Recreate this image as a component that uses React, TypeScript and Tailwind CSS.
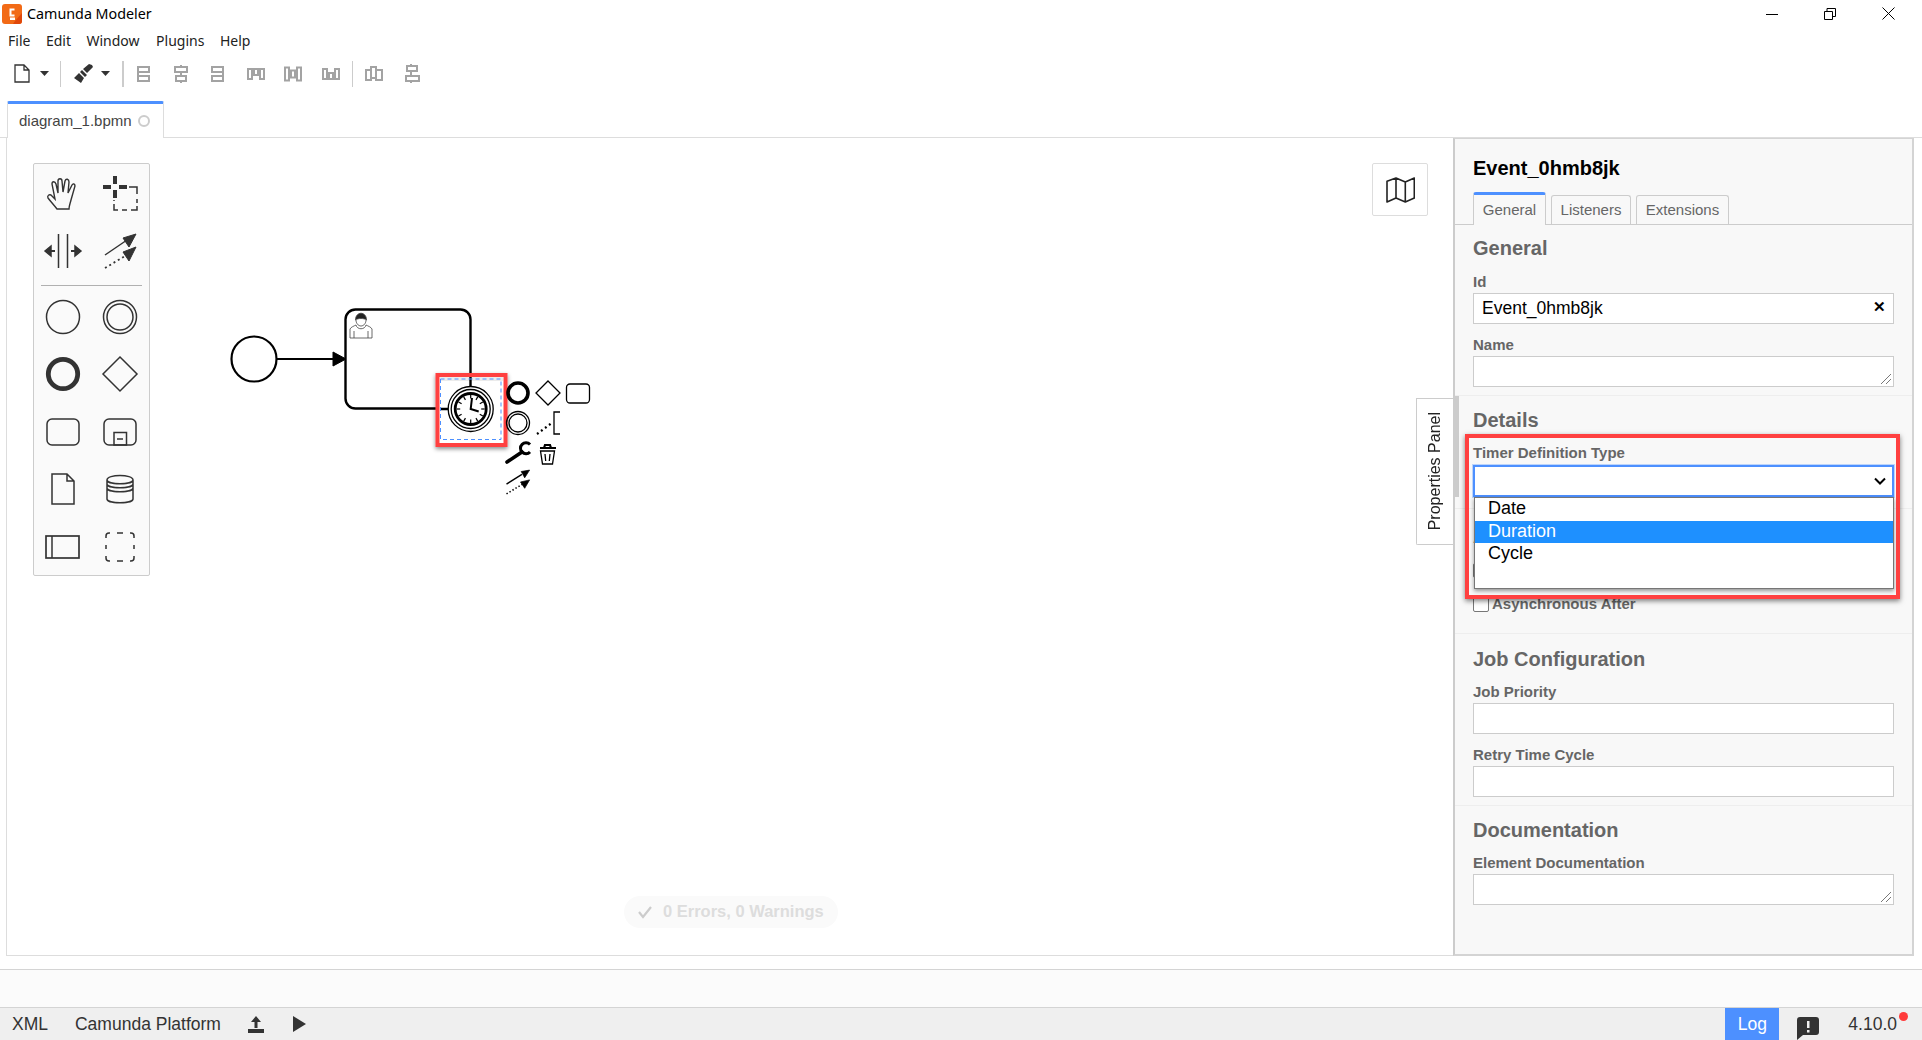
import React from "react";

const Sans = "font-['Liberation_Sans',Arial,sans-serif]";

const Ic = ({ children, w = 40, h = 40 }: { children: React.ReactNode; w?: number; h?: number }) => (
  <svg width={w} height={h} viewBox={`0 0 ${w} ${h}`} fill="none" stroke="#333" strokeWidth="1.5">
    {children}
  </svg>
);

const Lasso = () => (
  <Ic>
    <path d="M15 2v8M15 16v8M3 13h8M19 13h8" strokeWidth="4" />
    <path d="M29 13h8v7M37 25v4M37 32v4h-6M27 36h-5M18 36h-4v-6M14 27v-1" strokeWidth="1.5" />
  </Ic>
);
const SpaceTool = () => (
  <Ic>
    <path d="M15.500 3v34M24.500 3v34" />
    <path d="M2 20l6-5v10zM38 20l-6-5v10z" fill="#333" stroke="#333" />
    <path d="M7 20h5M28 20h5" strokeWidth="2" />
  </Ic>
);
const ConnectIc = () => (
  <svg width="40" height="40" viewBox="0 0 40 40" fill="none" stroke="#333">
    <path d="M5 24L27 9" strokeWidth="1.5" />
    <path d="M36 3L23 7l6 9z" fill="#333" />
    <path d="M5 37L25 25" strokeWidth="1.8" strokeDasharray="2 3" />
    <path d="M36 16l-13 5 6 9z" fill="#333" />
  </svg>
);

const Align = ({ d }: { d: string }) => (
  <svg width="20" height="24" viewBox="0 0 20 24" fill="none" stroke="#a3a3a3" strokeWidth="2">
    <path d={d} />
  </svg>
);

const paletteTop = [
  <Ic key="h">
    <path d="M14 35C11 31 8 28 5 24C4 22 6 20 8 21L12 25L9 10C9 7 12 7 13 10L15 19L15 7C15 4 19 4 19 7L20 18L22 7C23 4 26 5 26 8L25 19L29 11C30 9 32 10 32 12L28 26C27 30 26 32 26 35Z" strokeWidth="1.4" />
  </Ic>,
  <Lasso key="l" />,
  <SpaceTool key="s" />,
  <ConnectIc key="c" />,
];
const paletteBottom = [
  <Ic key="a"><circle cx="20" cy="20" r="16.5" /></Ic>,
  <Ic key="b"><circle cx="20" cy="20" r="16.5" /><circle cx="20" cy="20" r="13" /></Ic>,
  <Ic key="c"><circle cx="20" cy="20" r="14.7" strokeWidth="4.8" /></Ic>,
  <Ic key="d"><path d="M20 3l17 17-17 17L3 20z" /></Ic>,
  <Ic key="e"><rect x="4" y="7" width="32" height="26" rx="5" /></Ic>,
  <Ic key="f"><rect x="4" y="7" width="32" height="26" rx="5" /><rect x="14" y="20.5" width="12.5" height="12.5" /><path d="M17 27h6" /></Ic>,
  <Ic key="g"><path d="M9 5h15l7 7v23H9zM24 5v7h7" /></Ic>,
  <Ic key="h"><path d="M7 11c0-6 26-6 26 0v19c0 5-26 5-26 0zM7 11c0 5 26 5 26 0M7 15c0 5 26 5 26 0M7 19c0 5 26 5 26 0" /></Ic>,
  <Ic key="i"><rect x="3" y="9" width="33" height="22" strokeWidth="1.7" /><path d="M9 9v22" /></Ic>,
  <Ic key="j"><path d="M10 6h-1a3 3 0 0 0-3 3v2M17 6h6M30 6h1a3 3 0 0 1 3 3v2M34 18v4M34 29v2a3 3 0 0 1-3 3h-1M23 34h-6M10 34H9a3 3 0 0 1-3-3v-2M6 22v-4" /></Ic>,
];

const Diagram = () => {
  const ticks = Array.from({ length: 12 }, (_, i) => i * 30);
  return (
    <svg className="absolute left-0 top-0" width="700" height="420" viewBox="7 138 700 420" fill="none" stroke="#000">
      <defs>
        <filter id="sh" x="-20%" y="-20%" width="140%" height="140%">
          <feDropShadow dx="0" dy="2" stdDeviation="2" floodColor="#000" floodOpacity="0.45" />
        </filter>
      </defs>
      <circle cx="254" cy="359" r="22.5" strokeWidth="2.2" />
      <path d="M277 359H335" strokeWidth="2.2" />
      <path d="M333 352l13 7-13 7z" fill="#000" />
      <rect x="345.5" y="309.5" width="125" height="99" rx="10" strokeWidth="2.4" />
      <g stroke="#444" strokeWidth="0.8">
        <path d="M350 338v-9c1-2 4-3 6-4M372 338v-9c-1-2-4-3-6-4M350 338h22M354 338v-7M368 338v-7M356 325c1 5 9 5 10 0" />
        <path d="M355.500 320c0-9 11-9 11 0c-2-2-9-2-11 0z" fill="#222" />
        <path d="M356 320c0 3 2 6 5 6s5-3 5-6" />
      </g>
      <rect x="437.5" y="375" width="68" height="70" stroke="#ff4040" strokeWidth="4" fill="#fff" filter="url(#sh)" />
      <path d="M440 377h63v4h-63z" fill="#ddd" stroke="none" opacity="0.6" />
      <path d="M470.5 377v12M441 409h8" strokeWidth="2.4" />
      <rect x="440.5" y="379" width="60.5" height="60.5" stroke="#4d90ff" strokeWidth="1" strokeDasharray="4 3" />
      <circle cx="470.7" cy="409" r="22.5" fill="#fff" strokeWidth="1.3" />
      <circle cx="470.7" cy="409" r="19.5" strokeWidth="1.3" />
      <circle cx="470.7" cy="409" r="15.5" strokeWidth="2.8" />
      {ticks.map((t) => (
        <path key={t} d="M470.7 395v3.500" strokeWidth="1.2" transform={`rotate(${t} 470.7 409)`} />
      ))}
      <path d="M472 398l-1.300 11 8 2.500" strokeWidth="2" />
      <circle cx="518" cy="393" r="10" strokeWidth="3.6" />
      <path d="M548 381l12 12-12 12-12-12z" strokeWidth="1.3" />
      <rect x="566.5" y="384" width="23" height="19" rx="3.5" strokeWidth="1.3" />
      <circle cx="518" cy="423" r="11.5" strokeWidth="1.3" />
      <circle cx="518" cy="423" r="9" strokeWidth="1.3" />
      <path d="M537 434l16-12" strokeWidth="2.2" strokeDasharray="2 3" />
      <path d="M560 412h-6v22h6" strokeWidth="1.3" />
      <path d="M507 462l15-10" strokeWidth="3.6" strokeLinecap="round" />
      <path d="M530 444.500a5.500 5.500 0 1 0 0 7.500" strokeWidth="3" />
      <path d="M540 448h16M544 448l1-3h5l1 3" strokeWidth="2.2" />
      <path d="M540.500 451h14l-2 13h-10zM545 454l.7 7M550 454l-.7 7" strokeWidth="1.3" />
      <svg x="503" y="468" width="28" height="28" viewBox="0 0 40 40" stroke="#000"><path d="M5 23L27 9" strokeWidth="2" /><path d="M38 3L26 5l5 9z" fill="#000" /><path d="M5 37L28 23" strokeWidth="2.2" strokeDasharray="2 3" /><path d="M38 17l-13 3 6 9z" fill="#000" /></svg>
    </svg>
  );
};

const Label = ({ children, className = "" }: { children: React.ReactNode; className?: string }) => (
  <div className={`h-[18px] text-[15px] leading-[18px] font-bold text-[#666] ${className}`}>{children}</div>
);
const Heading = ({ children }: { children: React.ReactNode }) => (
  <div className="h-[24px] text-[20px] leading-[24px] font-bold text-[#666]">{children}</div>
);
const Input = ({ grip, children }: { grip?: boolean; children?: React.ReactNode }) => (
  <div className="relative mt-[2px] flex h-[31px] items-center border border-[#ccc] bg-white pl-[8px] text-[17.5px] text-black">
    {children}
    {grip && (
      <svg className="absolute bottom-[1px] right-[1px]" width="12" height="12" viewBox="0 0 12 12" stroke="#555" strokeWidth="0.8">
        <path d="M1 11L11 1M6 11l5-5" />
      </svg>
    )}
  </div>
);
const Group = ({ children, className = "" }: { children: React.ReactNode; className?: string }) => (
  <div className={`border-b border-[#eee] px-[18px] ${className}`}>{children}</div>
);
const PTab = ({ children, active }: { children: React.ReactNode; active?: boolean }) => (
  <div
    className={`flex items-center justify-center rounded-t-[3px] border border-[#ccc] text-[15px] text-[#666] ${
      active ? "relative z-10 -mb-px h-[33px] w-[73px] border-t-[3px] border-t-[#4d90ff] border-b-0 bg-[#f8f8f8]" : "h-[29px] border-b-0"
    }`}
  >
    {children}
  </div>
);

const Panel = () => (
  <div className="flex w-[461px] flex-col border-x-2 border-b-2 border-t border-[#d4d4d4] border-l-[#ccc] bg-[#f8f8f8]">
    <div className="relative flex h-[86px] flex-col justify-between border-b border-[#ccc] pl-[18px]">
      <div className="pt-[17px] text-[20px] font-bold leading-[24px] text-black">Event_0hmb8jk</div>
      <div className="flex items-end gap-[5px]">
        <PTab active>General</PTab>
        <div className="w-[80px]"><PTab>Listeners</PTab></div>
        <div className="w-[93px]"><PTab>Extensions</PTab></div>
      </div>
    </div>
    <Group className="h-[171px] pt-[11px]">
      <Heading>General</Heading>
      <Label className="mt-[13px]">Id</Label>
      <Input>
        Event_0hmb8jk
        <span className="absolute right-[7px] top-[2px] text-[15px] font-bold">✕</span>
      </Input>
      <Label className="mt-[12px]">Name</Label>
      <Input grip />
    </Group>
    <Group className="h-[113px] pt-[12px]">
      <Heading>Details</Heading>
      <Label className="mt-[12px]">Timer Definition Type</Label>
      <div className="relative mt-[3px] h-[32px] border-2 border-[#4d90ff] bg-white shadow-[0_0_0_1px_#bcd4fb]">
        <svg className="absolute right-[6px] top-[10px]" width="12" height="9" viewBox="0 0 12 9" fill="none" stroke="#000" strokeWidth="2">
          <path d="M1 1.500l5 5 5-5" />
        </svg>
        <div className="absolute -left-[1px] top-[30px] z-20 h-[92px] w-[420px] border border-[#767676] bg-white text-[18px] text-black shadow-[0_2px_4px_rgba(0,0,0,0.4)]">
          <div className="h-[23px] pl-[13px] leading-[21px]">Date</div>
          <div className="h-[22px] bg-[#1e90ff] pl-[13px] leading-[21px] text-white">Duration</div>
          <div className="h-[22px] pl-[13px] leading-[20px]">Cycle</div>
        </div>
      </div>
    </Group>
    <Group className="h-[125px] pt-[15px]">
      <Heading>A</Heading>
      <div className="mt-[15px] h-[15px] w-[15px] rounded-[2px] border border-[#777] bg-white" />
      <div className="mt-[17px] flex items-center gap-[3px]">
        <div className="h-[16px] w-[16px] rounded-[2px] border border-[#777] bg-white" />
        <Label>Asynchronous After</Label>
      </div>
    </Group>
    <Group className="h-[172px] pt-[13px]">
      <Heading>Job Configuration</Heading>
      <Label className="mt-[12px]">Job Priority</Label>
      <Input />
      <Label className="mt-[12px]">Retry Time Cycle</Label>
      <Input />
    </Group>
    <div className="flex-1 px-[18px] pt-[12px]">
      <Heading>Documentation</Heading>
      <Label className="mt-[12px]">Element Documentation</Label>
      <Input grip />
    </div>
    <div className="pointer-events-none absolute left-[1453px] top-[396px] h-[101px] w-[6px] bg-[#ccc]" />
    <div className="pointer-events-none absolute left-[1465px] top-[434px] z-30 h-[165px] w-[435px] border-[4px] border-[#ff4040] shadow-[0_2px_5px_rgba(0,0,0,0.5)]" />
  </div>
);

export default function App() {
  return (
    <div className={`relative flex h-[1040px] w-[1922px] flex-col overflow-hidden bg-white ${Sans}`}>
      {/* title bar */}
      <div className="flex h-[27px] items-center pl-[2px] font-['Noto_Sans',sans-serif] text-[14.3px] text-black">
        <svg width="20" height="20" viewBox="0 0 20 20">
          <rect width="20" height="20" rx="3" fill="#f26a16" />
          <path d="M13 17L20 9v8a3 3 0 0 1-3 3h-6z" fill="#e0480a" />
          <path d="M12.500 5.500H8.500v6h4" fill="none" stroke="#fff" strokeWidth="2" />
          <rect x="8" y="13.5" width="5" height="2.5" fill="#fff" />
        </svg>
        <span className="ml-[5px]">Camunda Modeler</span>
        <div className="ml-auto mr-[27px] flex items-center gap-[46px]">
          <svg width="12" height="12" viewBox="0 0 12 12" stroke="#000"><path d="M0 6.500h12" /></svg>
          <svg width="12" height="12" viewBox="0 0 12 12" fill="none" stroke="#000"><path d="M.5 3.500h8v8h-8zM3 3.500V.5h8.500v8H8.500" /></svg>
          <svg width="13" height="13" viewBox="0 0 13 13" stroke="#000"><path d="M.5.5l12 12M12.500.5l-12 12" /></svg>
        </div>
      </div>
      {/* menu */}
      <div className="flex h-[27px] items-center gap-[15.5px] pl-[8px] font-['Noto_Sans',sans-serif] text-[14px] text-[#222]">
        <span>File</span><span>Edit</span><span>Window</span><span className="ml-[1px]">Plugins</span><span>Help</span>
      </div>
      {/* toolbar */}
      <div className="flex h-[39px] items-center pl-[14px]">
        <svg width="16" height="19" viewBox="0 0 16 19" fill="none" stroke="#333" strokeWidth="1.3"><path d="M1 1h9l5 5v12H1zM10 1v5h5" /></svg>
        <svg className="ml-[10px]" width="9" height="5" viewBox="0 0 9 5"><path d="M0 0h9L4.500 5z" fill="#333" /></svg>
        <div className="ml-[11px] h-[26px] w-px bg-[#ccc]" />
        <svg className="ml-[13px]" width="19" height="19" viewBox="0 0 19 19" fill="#333"><path d="M18 1l-3-1-6 5 4 4 6-6zM8 6l5 5-2 2-5-5zM5 9l5 5-3 5-7-5z" /></svg>
        <svg className="ml-[8px]" width="9" height="5" viewBox="0 0 9 5"><path d="M0 0h9L4.500 5z" fill="#333" /></svg>
        <div className="ml-[12px] h-[26px] w-[2px] bg-[#ccc]" />
        <div className="ml-[9px] flex gap-[17.5px]">
          <Align d="M5 4v16M5 5h11v5H5M5 14h11v5H5" />
          <Align d="M10 3v2M10 10v4M10 19v2M4 5h12v5H4zM5 14h10v5H5z" />
          <Align d="M15 4v16M15 5H4v5h11M15 14H4v5h11" />
          <Align d="M1 7h18M2 7v10h4V7M8 7v6h4V7M14 7v10h4V7" />
          <Align d="M2 5.500v13h4v-13zM8 8.500v7h4v-7zM14 5.500v13h4v-13z" />
          <Align d="M1 17h18M2 17V7h4v10M8 17v-6h4v6M14 17V7h4v10" />
        </div>
        <div className="ml-[11px] h-[26px] w-px bg-[#ccc]" />
        <div className="ml-[11px] flex gap-[18px]">
          <Align d="M2 8v10h5V8zM7 5v11h5V5zM12 8v10h6V8z" />
          <Align d="M5 4h10v5H5zM4 14h13v5H4zM9 2v2M9 9v5M9 19v2" />
        </div>
      </div>
      {/* tabs */}
      <div className="mt-[8px] flex h-[37px] border-b border-[#ddd] pl-[7px]">
        <div className="flex h-[37px] w-[157px] items-center rounded-t-[2px] border-x border-t-[3px] border-[#ddd] border-t-[#4d90ff] bg-white pl-[11px] text-[15px] text-[#444]">
          diagram_1.bpmn
          <span className="ml-[6px] h-[12px] w-[12px] rounded-full border-2 border-[#ccc]" />
        </div>
      </div>
      {/* main */}
      <div className="ml-[6px] mr-[8px] flex h-[818px]">
        <div className="relative flex-1 border-b border-l border-[#ddd]">
          <Diagram />
          <div className="absolute left-[26px] top-[25px] flex h-[413px] w-[117px] flex-col rounded-[2px] border border-[#ccc] bg-[#fafafa] px-[1px] pt-[1px]">
            <div className="grid shrink-0 grid-cols-2">
              {paletteTop.map((ic, i) => (
                <div key={i} className="flex h-[57px] items-center justify-center">{ic}</div>
              ))}
            </div>
            <div className="mx-[6px] mb-[2px] mt-[6px] h-px shrink-0 bg-[#b0b0b0]" />
            <div className="grid shrink-0 grid-cols-2">
              {paletteBottom.map((ic, i) => (
                <div key={i} className="flex h-[57.5px] items-center justify-center">{ic}</div>
              ))}
            </div>
          </div>
          <div className="absolute right-[25px] top-[25px] flex h-[53px] w-[56px] items-center justify-center rounded-[2px] border border-[#ddd] bg-white">
            <svg width="29" height="26" viewBox="0 0 29 26" fill="none" stroke="#222" strokeWidth="1.6" strokeLinejoin="round">
              <path d="M1 4.300L10 1l9.300 4L28.300 1v20l-9 4-9.300-4-9 4zM10 1v20M19.300 5v20" />
            </svg>
          </div>
          <div className="absolute left-[617px] top-[758px] flex h-[32px] w-[214px] items-center rounded-full bg-[#fafafa] pl-[13px] text-[16.5px] font-bold text-[#ddd]">
            <svg width="16" height="14" viewBox="0 0 16 14" fill="none" stroke="#ccc" strokeWidth="2.200"><path d="M2 7l4 5 8-10" /></svg>
            <span className="-mt-[2px] ml-[10px]">0 Errors, 0 Warnings</span>
          </div>
          <div className="absolute right-0 top-[260px] flex h-[147px] w-[37px] items-center justify-center rounded-bl-[2px] border-y border-l border-[#ccc] bg-white text-[16px] text-[#222]">
            <span className="rotate-180 [writing-mode:vertical-rl]">Properties Panel</span>
          </div>
        </div>
        <Panel />
      </div>
      {/* log bar */}
      <div className="mt-[13px] h-[39px] border-y border-[#d4d4d4] bg-[#fbfbfb]" />
      {/* footer */}
      <div className="flex h-[32px] flex-1 items-center bg-[#efefef] text-[17.5px] text-[#333]">
        <span className="ml-[12px]">XML</span>
        <span className="ml-[27px]">Camunda Platform</span>
        <svg className="ml-[26px]" width="18" height="17" viewBox="0 0 18 17" fill="#333"><path d="M9 0l5 6h-3.500v6h-3V6H4zM1 13h16v4H1z" /></svg>
        <svg className="ml-[28px]" width="13" height="16" viewBox="0 0 13 16" fill="#333"><path d="M0 0l13 8-13 8z" /></svg>
        <div className="ml-auto flex h-full w-[54px] items-center justify-center bg-[#4d90ff] text-white">Log</div>
        <svg className="ml-[18px] mt-[8px]" width="22" height="24" viewBox="0 0 22 24" fill="#333">
          <path d="M3 1h16a3 3 0 0 1 3 3v12a3 3 0 0 1-3 3H6l-6 5V4a3 3 0 0 1 3-3z" />
          <path d="M10 5h2.500v7H10zM10 14h2.500v2.500H10z" fill="#efefef" />
        </svg>
        <div className="relative ml-[29px] mr-[25px]">
          4.10.0
          <span className="absolute -right-[11px] top-[1px] h-[9px] w-[9px] rounded-full bg-[#ff3b3b]" />
        </div>
      </div>
    </div>
  );
}
